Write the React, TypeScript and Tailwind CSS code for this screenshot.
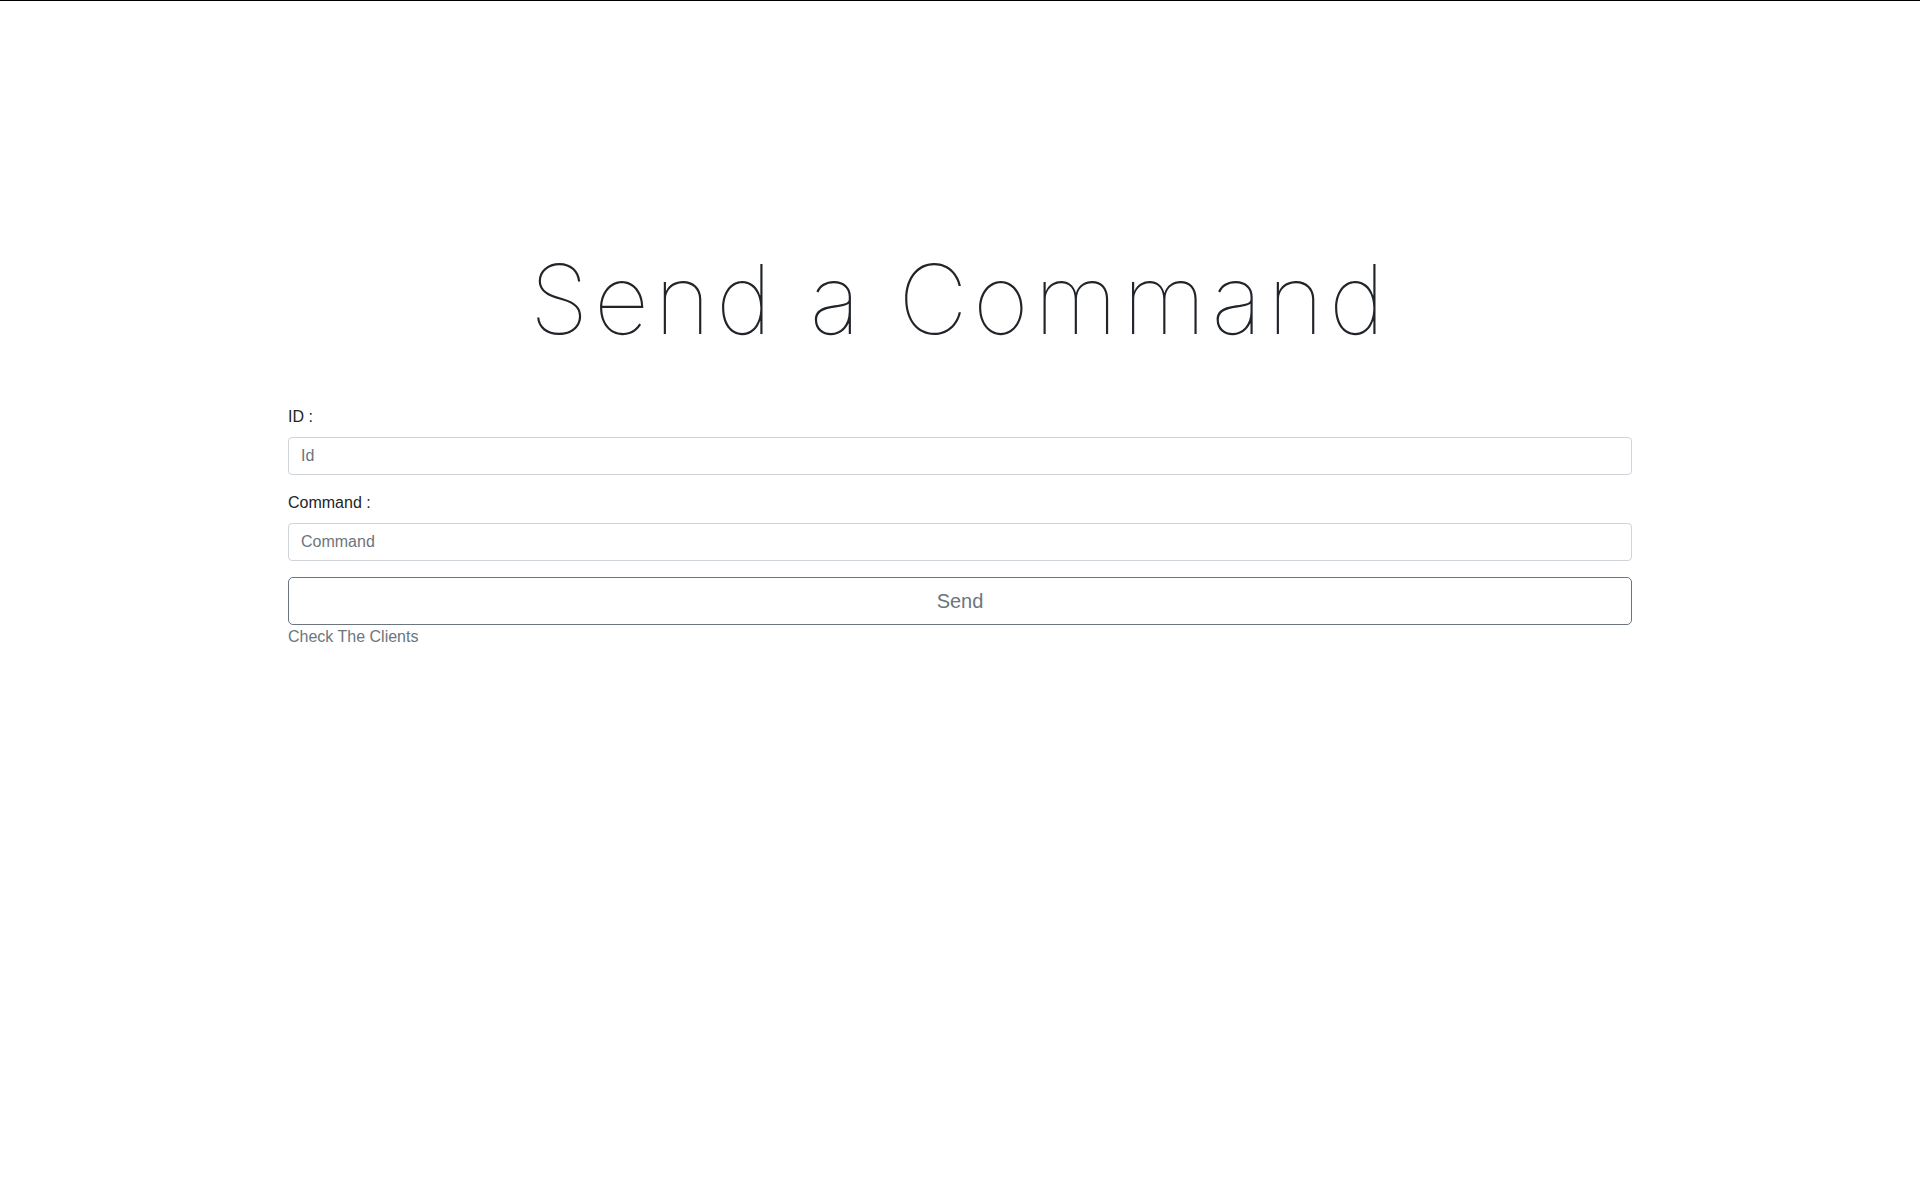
const App = () => {
  return (
    <div className="min-h-screen bg-white border-t border-black text-[#212529] font-['Liberation_Sans',Arial,sans-serif]">
      <div className="w-[70%] mx-auto">
        <h1 className="pt-[241px] mb-[48px] text-center text-[96px] leading-[1.2] font-thin tracking-[5.5px] font-['Inter',sans-serif]">
          Send a Command
        </h1>
        <form onSubmit={(e) => e.preventDefault()}>
          <div className="mb-4">
            <label htmlFor="id" className="block mb-2 text-base leading-6">
              ID :
            </label>
            <input
              id="id"
              type="text"
              placeholder="Id"
              className="block w-full h-[38px] px-3 py-1.5 text-base leading-6 border border-[#ced4da] rounded placeholder:text-[#6c757d] outline-none"
            />
          </div>
          <div className="mb-4">
            <label htmlFor="command" className="block mb-2 text-base leading-6">
              Command :
            </label>
            <input
              id="command"
              type="text"
              placeholder="Command"
              className="block w-full h-[38px] px-3 py-1.5 text-base leading-6 border border-[#ced4da] rounded placeholder:text-[#6c757d] outline-none"
            />
          </div>
          <button
            type="submit"
            className="block w-full h-12 px-4 py-2 text-xl leading-[1.5] text-[#6c757d] bg-white border border-[#6c757d] rounded-[5px]"
          >
            Send
          </button>
          <a href="#" className="block text-base leading-6 text-[#6c757d]">
            Check The Clients
          </a>
        </form>
      </div>
    </div>
  );
};

export default App;
